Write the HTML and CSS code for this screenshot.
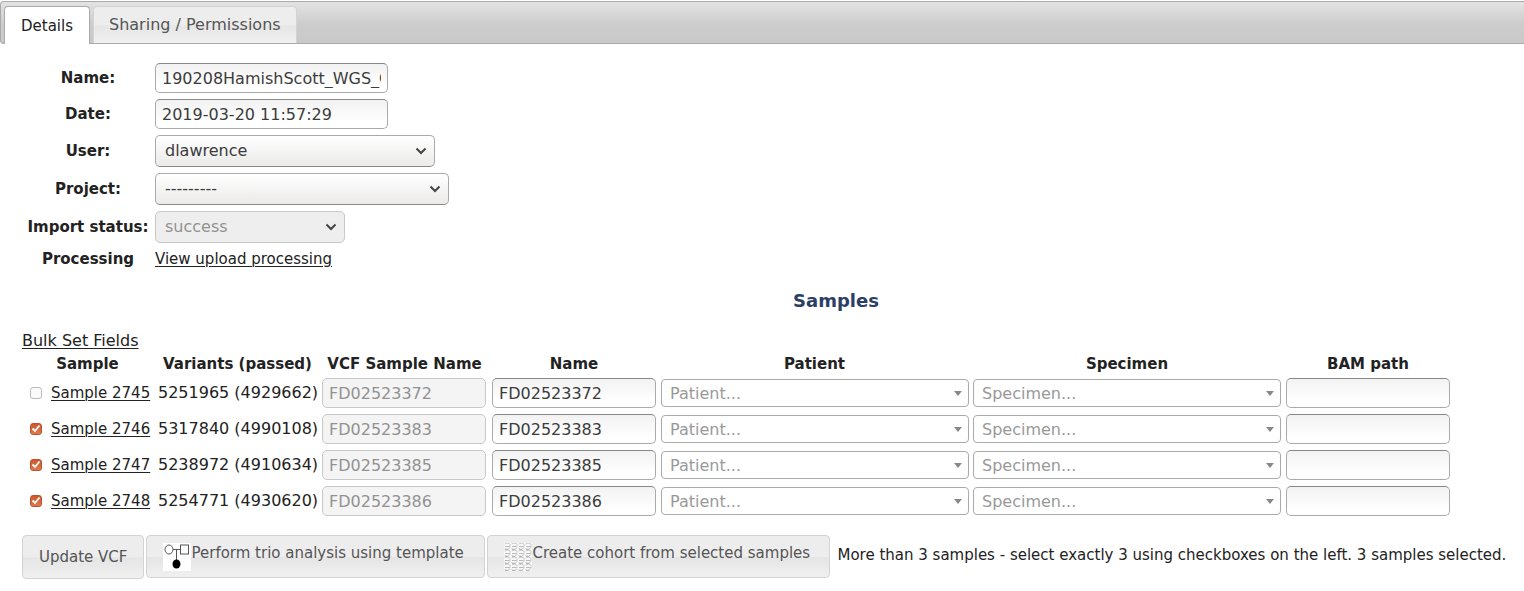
FILE: index.html
```html
<!DOCTYPE html>
<html lang="en">
<head>
<meta charset="utf-8">
<title>VCF details</title>
<link rel="stylesheet" href="styles.css">
</head>
<body>
<nav class="tabs">
  <a class="tab active" href="#details">Details</a>
  <a class="tab" href="#sharing">Sharing / Permissions</a>
</nav>
<main class="panel" id="details">
  <table class="fields">
    <tr><th><label for="name">Name:</label></th><td><input class="text wide" id="name" value="190208HamishScott_WGS_GATK"></td></tr>
    <tr><th><label for="date">Date:</label></th><td><input class="text wide" id="date" value="2019-03-20 11:57:29"></td></tr>
    <tr class="tall"><th><label for="user">User:</label></th><td><select class="drop user" id="user"><option>dlawrence</option></select></td></tr>
    <tr class="tall"><th><label for="project">Project:</label></th><td><select class="drop project" id="project"><option>---------</option></select></td></tr>
    <tr class="tall"><th><label for="status">Import status:</label></th><td><select class="drop status" id="status" disabled><option>success</option></select></td></tr>
    <tr class="short"><th>Processing</th><td><a class="small" href="#processing">View upload processing</a></td></tr>
  </table>
  <h3 class="heading">Samples</h3>
  <a class="bulk" href="#bulk">Bulk Set Fields</a>
  <table class="samples">
    <colgroup><col class="check-col"><col class="sample-col"><col class="variant-col"><col class="input-col"><col class="name-col"><col class="pick-col"><col class="specimen-col"><col class="bam-col"></colgroup>
    <thead>
      <tr><th colspan="2">Sample</th><th>Variants (passed)</th><th>VCF Sample Name</th><th>Name</th><th>Patient</th><th>Specimen</th><th class="last">BAM path</th></tr>
    </thead>
    <tbody>
      <tr>
        <td><input type="checkbox" class="check" aria-label="Select sample 2745"></td>
        <td><a class="small" href="#s2745">Sample 2745</a></td><td>5251965 (4929662)</td>
        <td><input class="text" aria-label="VCF sample name" value="FD02523372" disabled></td>
        <td><input class="text" aria-label="Name" value="FD02523372"></td>
        <td><select class="pick" aria-label="Patient"><option>Patient...</option></select></td>
        <td><select class="pick" aria-label="Specimen"><option>Specimen...</option></select></td>
        <td><input class="text" aria-label="BAM path"></td>
      </tr>
      <tr>
        <td><input type="checkbox" class="check" aria-label="Select sample 2746" checked></td>
        <td><a class="small" href="#s2746">Sample 2746</a></td><td>5317840 (4990108)</td>
        <td><input class="text" aria-label="VCF sample name" value="FD02523383" disabled></td>
        <td><input class="text" aria-label="Name" value="FD02523383"></td>
        <td><select class="pick" aria-label="Patient"><option>Patient...</option></select></td>
        <td><select class="pick" aria-label="Specimen"><option>Specimen...</option></select></td>
        <td><input class="text" aria-label="BAM path"></td>
      </tr>
      <tr>
        <td><input type="checkbox" class="check" aria-label="Select sample 2747" checked></td>
        <td><a class="small" href="#s2747">Sample 2747</a></td><td>5238972 (4910634)</td>
        <td><input class="text" aria-label="VCF sample name" value="FD02523385" disabled></td>
        <td><input class="text" aria-label="Name" value="FD02523385"></td>
        <td><select class="pick" aria-label="Patient"><option>Patient...</option></select></td>
        <td><select class="pick" aria-label="Specimen"><option>Specimen...</option></select></td>
        <td><input class="text" aria-label="BAM path"></td>
      </tr>
      <tr>
        <td><input type="checkbox" class="check" aria-label="Select sample 2748" checked></td>
        <td><a class="small" href="#s2748">Sample 2748</a></td><td>5254771 (4930620)</td>
        <td><input class="text" aria-label="VCF sample name" value="FD02523386" disabled></td>
        <td><input class="text" aria-label="Name" value="FD02523386"></td>
        <td><select class="pick" aria-label="Patient"><option>Patient...</option></select></td>
        <td><select class="pick" aria-label="Specimen"><option>Specimen...</option></select></td>
        <td><input class="text" aria-label="BAM path"></td>
      </tr>
    </tbody>
  </table>
  <div class="actions">
    <button class="button update" type="button">Update VCF</button>
    <button class="button trio" type="button">
      <svg class="icon" viewBox="0 0 28 28" aria-hidden="true"><rect width="28" height="28" fill="#fff"/><g fill="none" stroke="#555"><ellipse cx="6" cy="6.5" rx="4" ry="4.5"/><rect x="17.5" y="2" width="8" height="9"/><path d="M10 6.5H17.5M13.500 6.500V17"/></g><ellipse cx="13.500" cy="21" rx="4" ry="4.500"/></svg>
      <span>Perform trio analysis using template</span>
    </button>
    <button class="button cohort" type="button">
      <svg class="icon" viewBox="0 0 28 28" aria-hidden="true">
        <defs><g id="member"><rect width="7" height="7" fill="#fafafa"/><path d="M.5 1Q3.500-.5 6 1V4.500Q3.500 7.500 .5 5.500" fill="none" stroke="#ccc"/><path d="M1 3.500H5.500M1 6.500H4.500" stroke="#aaa" stroke-width=".8"/></g>
        <g id="row"><use href="#member"/><use href="#member" x="7"/><use href="#member" x="14"/><use href="#member" x="21"/></g></defs>
        <use href="#row"/><use href="#row" y="7"/><use href="#row" y="14"/><use href="#row" y="21"/>
      </svg>
      <span>Create cohort from selected samples</span>
    </button>
    <span class="message">More than 3 samples - select exactly 3 using checkboxes on the left. 3 samples selected.</span>
  </div>
</main>
</body>
</html>
```
FILE: styles.css
```css
* { box-sizing: border-box; }
body { margin: 0; background: #fff; color: #222; font: 16px/20px "DejaVu Sans", sans-serif; }
a { color: #222; text-underline-offset: 2px; text-decoration-thickness: 1px; }
input, select, button { font: inherit; margin: 0; }
table { border-spacing: 0; }
th { font-weight: bold; font-size: 15px; text-align: center; }
td, th { padding: 0; }
.small { font-size: 15px; }

.tabs { display: flex; align-items: flex-end; gap: 3px; height: 43px; margin-top: 1px; padding-left: 3px; border: 1px solid #aaa; border-right: 0; border-radius: 4px 0 0 4px; background: linear-gradient(#e3e3e3, #ccc 55%, #c9c9c9); }
.tab { height: 37px; padding: 8px 15px; border: 1px solid #d3d3d3; border-bottom: 0; border-radius: 4px 4px 0 0; color: #555; background: linear-gradient(#ededed 50%, #e6e6e6 52%, #f0f0f0); text-decoration: none; }
.tab.active { height: 38px; margin-bottom: -1px; padding: 9px 16px; border-color: #aaa; color: #212121; background: #fff; font-size: 15px; }

.panel { padding: 16px 0 12px 22px; }
.fields tr { height: 36px; }
.fields tr.tall { height: 38px; }
.fields tr.short { height: 25px; }
.fields th { width: 132px; white-space: nowrap; }
.fields td { padding-left: 1px; }

.text { display: block; width: 164px; height: 30px; padding: 0 6px; border: 1px solid #aaa; border-top-color: #888; border-radius: 5px; background: linear-gradient(#f2f2f2, #fff 80%); color: #3c3c3c; }
.text.wide { width: 233px; }
.text:disabled { border-color: #c8c8c8; background: #f4f4f4; color: #929292; }
.drop { display: block; height: 32px; padding: 0 9px; border: 1px solid #aaa; border-bottom-color: #888; border-radius: 5px; appearance: none; color: #3c3c3c; background: url("data:image/svg+xml,%3Csvg xmlns='http://www.w3.org/2000/svg' width='12' height='8'%3E%3Cpath d='M1.500 1.500L6 6L10.500 1.500' fill='none' stroke='%23444' stroke-width='2'/%3E%3C/svg%3E") right 7px center no-repeat, linear-gradient(#fff, #ebeae9); }
.drop.user { width: 280px; }
.drop.project { width: 294px; }
.drop.status { width: 190px; }
.drop:disabled { border-color: #c8c8c8; background-color: #eee; background-image: url("data:image/svg+xml,%3Csvg xmlns='http://www.w3.org/2000/svg' width='12' height='8'%3E%3Cpath d='M1.500 1.500L6 6L10.500 1.500' fill='none' stroke='%23444' stroke-width='2'/%3E%3C/svg%3E"); color: #929292; opacity: 1; }

.heading { margin: 20px 0; padding-left: 126px; font-size: 18px; line-height: 20px; text-align: center; color: #2c3e66; }
.bulk { display: table; }
.samples th { height: 24px; padding: 1px 5px 0 0; white-space: nowrap; }
.samples th.last { padding-right: 0; }
.samples td { height: 36px; white-space: nowrap; }
.check-col { width: 29px; }
.sample-col { width: 107px; }
.variant-col { width: 164px; }
.input-col { width: 170px; }
.name-col { width: 169px; }
.pick-col { width: 312px; }
.specimen-col { width: 313px; }
.bam-col { width: 164px; }
.check { display: block; width: 12px; height: 12px; margin-left: 8px; border: 1px solid #bbb; border-radius: 3px; appearance: none; background: #fafafa; }
.check:checked { border-color: #b4532f; background: url("data:image/svg+xml,%3Csvg xmlns='http://www.w3.org/2000/svg' width='12' height='12'%3E%3Cpath d='M2.500 5.500L5 8L9.500 2.500' fill='none' stroke='white' stroke-width='1.800'/%3E%3C/svg%3E") center no-repeat, linear-gradient(#d0582a, #e07a4d); }
.pick { display: block; width: 308px; height: 28px; padding: 1px 8px 0; border: 1px solid #aaa; border-radius: 4px; appearance: none; color: #999; background: #fff url("data:image/svg+xml,%3Csvg xmlns='http://www.w3.org/2000/svg' width='8' height='5'%3E%3Cpath d='M0 0H8L4 5Z' fill='%23888'/%3E%3C/svg%3E") right 6px center no-repeat; }

.actions { display: flex; align-items: flex-start; gap: 2px; margin-top: 16px; font-size: 15px; }
.button { display: flex; flex: none; align-items: flex-start; height: 43px; padding: 7px 16px; border: 1px solid #d3d3d3; border-radius: 4px; color: #555; background: linear-gradient(#ededed 50%, #e5e5e5 52%, #f0f0f0); white-space: nowrap; }
.button.update { height: 44px; padding: 11px 16px; }
.trio { width: 339px; }
.cohort { width: 343px; }
.icon { width: 28px; height: 28px; }
.message { margin: 10px 0 0 5px; white-space: nowrap; }
```
